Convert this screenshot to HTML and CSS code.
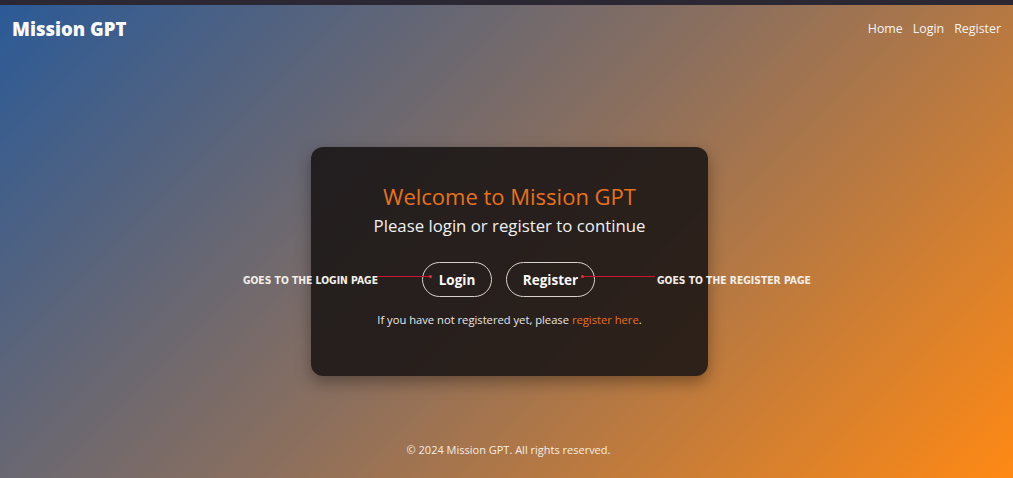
FILE: index.html
```html
<!DOCTYPE html>
<html lang="en">
<head>
<meta charset="utf-8">
<title>Mission GPT</title>
<link rel="stylesheet" href="styles.css">
</head>
<body>
<div class="page">
  <header class="topbar">
    <div class="brand">Mission GPT</div>
    <nav class="nav">
      <a href="#">Home</a>
      <a href="#">Login</a>
      <a href="#">Register</a>
    </nav>
  </header>
  <main class="main">
    <section class="card">
      <h1 class="title">Welcome to Mission GPT</h1>
      <p class="subtitle">Please login or register to continue</p>
      <div class="actions">
        <a class="btn btn-login" href="#">Login
          <span class="note note-left"><span class="note-text">GOES TO THE LOGIN PAGE</span><span class="note-line"></span></span>
        </a>
        <a class="btn btn-register" href="#">Register
          <span class="note note-right"><span class="note-line"></span><span class="note-text">GOES TO THE REGISTER PAGE</span></span>
        </a>
      </div>
      <p class="hint">If you have not registered yet, please <a href="#">register here</a>.</p>
    </section>
  </main>
  <footer class="footer">© 2024 Mission GPT. All rights reserved.</footer>
</div>
</body>
</html>
```

FILE: styles.css
```css
* { box-sizing: border-box; }
html, body { margin: 0; padding: 0; }
body {
  font-family: "Open Sans", "Noto Sans", sans-serif;
  color: #f2f2f2;
  width: 1013px;
  height: 478px;
  overflow: hidden;
}
.page {
  height: 478px;
  display: flex;
  flex-direction: column;
  background: linear-gradient(135deg, #2b5a97 0%, #8c6f5d 50%, #ff8914 100%);
  border-top: 5px solid #2c2833;
}
.topbar {
  display: flex;
  justify-content: space-between;
  align-items: center;
  padding: 11px 12px 0 12px;
  height: 36px;
}
.brand {
  font-weight: 800;
  font-size: 18.5px;
  color: #fafafa;
}
.nav { display: flex; gap: 10px; }
.nav a {
  color: #f4f4f4;
  text-decoration: none;
  font-size: 12.4px;
}
.main {
  flex: 1;
  display: flex;
  justify-content: center;
  padding-top: 106px;
  padding-left: 6px;
}
.card {
  position: relative;
  width: 397px;
  height: 229px;
  border-radius: 12px;
  background: rgba(24, 20, 20, 0.87);
  box-shadow: 0 6px 16px rgba(0, 0, 0, 0.35);
  text-align: center;
  padding-top: 35px;
}
.title {
  margin: 0;
  font-size: 22px;
  font-weight: 400;
  color: #e6731a;
  line-height: 28px;
  white-space: nowrap;
}
.subtitle {
  margin: 5px 0 0;
  font-size: 16.8px;
  line-height: 22px;
  color: #f0f0f0;
  white-space: nowrap;
}
.actions {
  display: flex;
  justify-content: center;
  gap: 14px;
  margin-top: 25px;
  padding-right: 2px;
}
.btn {
  position: relative;
  display: flex;
  align-items: center;
  justify-content: center;
  height: 35px;
  border: 1.5px solid #d8d2cd;
  border-radius: 18px;
  color: #fafafa;
  font-weight: 700;
  font-size: 13.5px;
  text-decoration: none;
}
.btn-login { width: 70px; }
.btn-register { width: 89px; }
.note {
  position: absolute;
  top: 11px;
  display: flex;
  align-items: center;
  font-family: "DejaVu Sans Condensed", "DejaVu Sans", sans-serif;
  font-weight: 700;
  font-size: 10.3px;
  color: #f2eee8;
  white-space: nowrap;
}
.note-left { right: 60px; }
.note-right { left: 75px; }
.note-line {
  display: block;
  height: 1.5px;
  background: #cc1530;
  position: relative;
}
.note-line::after {
  content: "";
  position: absolute;
  top: -1px;
  width: 3px;
  height: 3px;
  border-radius: 50%;
  background: #e0304a;
}
.note-left .note-line { width: 53px; margin-top: -7px; }
.note-left .note-line::after { right: -1px; }
.note-right .note-line { width: 73px; margin-top: -7px; margin-right: 2px; }
.note-right .note-line::after { left: -1px; }
.hint {
  margin: 15px 0 0;
  font-size: 11.2px;
  color: #e6e6e6;
  white-space: nowrap;
}
.hint a { color: #e6731a; text-decoration: none; }
.footer {
  text-align: center;
  font-size: 11px;
  color: #f4ede4;
  padding-bottom: 21px;
  padding-left: 4px;
}
```
